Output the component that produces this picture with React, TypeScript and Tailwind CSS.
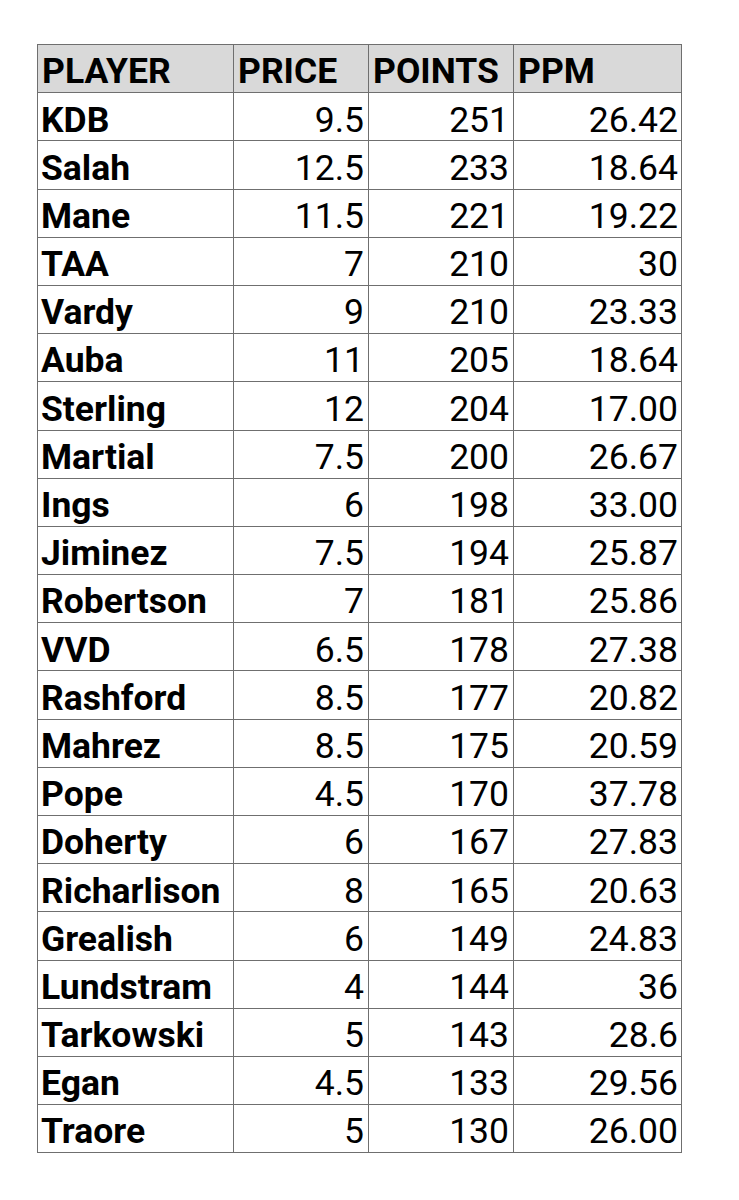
const rows: [string, string, string, string][] = [
  ["KDB", "9.5", "251", "26.42"],
  ["Salah", "12.5", "233", "18.64"],
  ["Mane", "11.5", "221", "19.22"],
  ["TAA", "7", "210", "30"],
  ["Vardy", "9", "210", "23.33"],
  ["Auba", "11", "205", "18.64"],
  ["Sterling", "12", "204", "17.00"],
  ["Martial", "7.5", "200", "26.67"],
  ["Ings", "6", "198", "33.00"],
  ["Jiminez", "7.5", "194", "25.87"],
  ["Robertson", "7", "181", "25.86"],
  ["VVD", "6.5", "178", "27.38"],
  ["Rashford", "8.5", "177", "20.82"],
  ["Mahrez", "8.5", "175", "20.59"],
  ["Pope", "4.5", "170", "37.78"],
  ["Doherty", "6", "167", "27.83"],
  ["Richarlison", "8", "165", "20.63"],
  ["Grealish", "6", "149", "24.83"],
  ["Lundstram", "4", "144", "36"],
  ["Tarkowski", "5", "143", "28.6"],
  ["Egan", "4.5", "133", "29.56"],
  ["Traore", "5", "130", "26.00"],
];

const cell = "border border-[#6f6f6f] h-[48.2px] p-0 leading-none align-middle";

export default function App() {
  return (
    <div className="min-h-[1200px] bg-white pt-[44px] pl-[37px] font-['Roboto',sans-serif] text-[35.5px] text-black">
      <table className="w-[644px] table-fixed border-collapse">
        <colgroup>
          <col className="w-[196px]" />
          <col className="w-[135px]" />
          <col className="w-[145px]" />
          <col className="w-[168px]" />
        </colgroup>
        <thead>
          <tr className="bg-[#d9d9d9]">
            {["PLAYER", "PRICE", "POINTS", "PPM"].map((h) => (
              <th key={h} className={`${cell} pl-[4px] pt-[7px] text-left font-bold`}>
                {h}
              </th>
            ))}
          </tr>
        </thead>
        <tbody>
          {rows.map(([name, price, points, ppm]) => (
            <tr key={name}>
              <td className={`${cell} pl-[3px] pt-[7px] font-bold`}>{name}</td>
              <td className={`${cell} pr-[4px] pt-[7px] text-right`}>{price}</td>
              <td className={`${cell} pr-[4px] pt-[7px] text-right`}>{points}</td>
              <td className={`${cell} pr-[3px] pt-[7px] text-right`}>{ppm}</td>
            </tr>
          ))}
        </tbody>
      </table>
    </div>
  );
}
